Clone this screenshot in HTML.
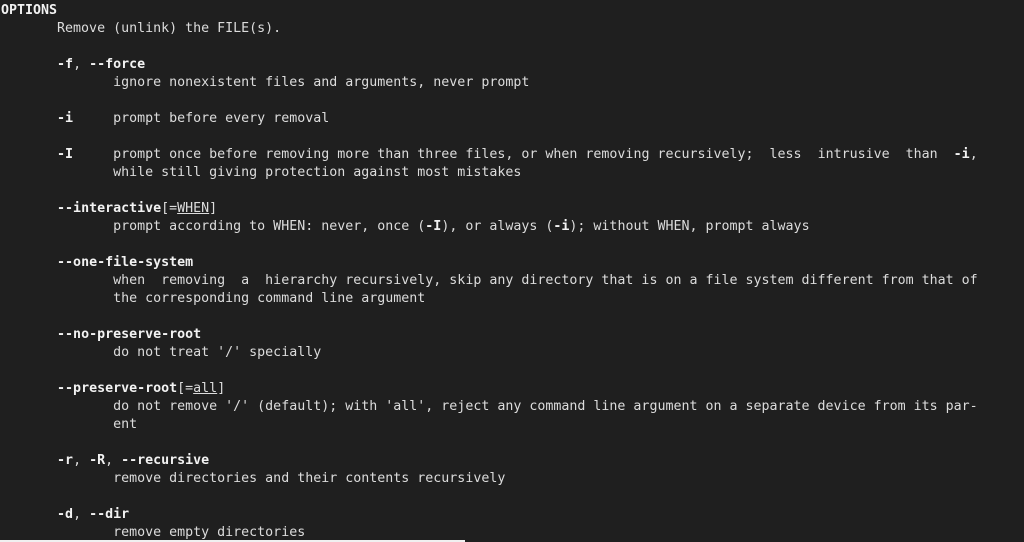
<!DOCTYPE html>
<html><head><meta charset="utf-8"><style>
html,body{margin:0;padding:0;background:#1f1f1f;width:1024px;height:542px;overflow:hidden;}
pre{margin:0;padding:2px 0 0 1px;font-family:"DejaVu Sans Mono","Liberation Mono",monospace;font-size:13.3px;line-height:18px;color:#dcdcdc;white-space:pre;}
b{color:#f2f2f2;font-weight:bold;}
u{text-decoration:underline;}
.bar{position:absolute;left:0;top:540px;width:465px;height:2px;background:#f0f0f0;}
</style></head><body>
<pre><b>OPTIONS</b>
       Remove (unlink) the FILE(s).

       <b>-f</b>, <b>--force</b>
              ignore nonexistent files and arguments, never prompt

       <b>-i</b>     prompt before every removal

       <b>-I</b>     prompt once before removing more than three files, or when removing recursively;  less  intrusive  than  <b>-i</b>,
              while still giving protection against most mistakes

       <b>--interactive</b>[=<u>WHEN</u>]
              prompt according to WHEN: never, once (<b>-I</b>), or always (<b>-i</b>); without WHEN, prompt always

       <b>--one-file-system</b>
              when  removing  a  hierarchy recursively, skip any directory that is on a file system different from that of
              the corresponding command line argument

       <b>--no-preserve-root</b>
              do not treat '/' specially

       <b>--preserve-root</b>[=<u>all</u>]
              do not remove '/' (default); with 'all', reject any command line argument on a separate device from its par-
              ent

       <b>-r</b>, <b>-R</b>, <b>--recursive</b>
              remove directories and their contents recursively

       <b>-d</b>, <b>--dir</b>
              remove empty directories</pre>
<div class="bar"></div>
</body></html>
